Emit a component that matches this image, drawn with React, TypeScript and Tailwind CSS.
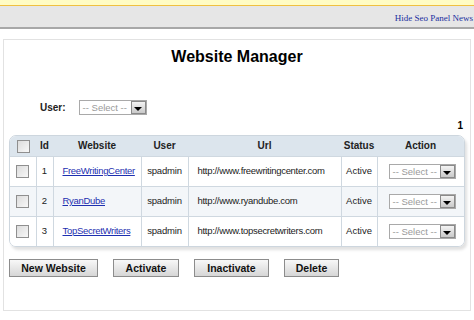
import React from "react";

const LS = { fontFamily: "'Liberation Sans', Arial, sans-serif" };

function Sel({ w = 68 }: { w?: number }) {
  return (
    <div
      className="flex items-center h-[15px] border border-[#a9a9a9] bg-white"
      style={{ width: w }}
    >
      <span className="flex-1 pl-[3px] text-[9.5px] leading-[13px] text-[#9a9a9a] whitespace-nowrap overflow-hidden">
        -- Select --
      </span>
      <span className="w-[15px] h-[13px] border border-[#8a8a8a] bg-gradient-to-b from-[#f4f4f4] to-[#c9c9c9] flex items-end justify-center pb-[2px]">
        <span className="block w-0 h-0 border-l-[4px] border-r-[4px] border-t-[4px] border-l-transparent border-r-transparent border-t-black" />
      </span>
    </div>
  );
}

function Check() {
  return (
    <span className="inline-block w-[13px] h-[13px] border border-[#8f8f8f] bg-gradient-to-br from-[#dcdcdc] to-[#f8f8f8] align-middle" />
  );
}

const rows = [
  { id: 1, name: "FreeWritingCenter", url: "http://www.freewritingcenter.com" },
  { id: 2, name: "RyanDube", url: "http://www.ryandube.com" },
  { id: 3, name: "TopSecretWriters", url: "http://www.topsecretwriters.com" },
];

function Btn({ label, w }: { label: string; w: number }) {
  return (
    <button
      className="h-[18px] border border-[#8c8c8c] bg-gradient-to-b from-[#f8f8f8] to-[#d6d6d6] text-[10.5px] font-bold text-[#111] leading-[16px]"
      style={{ width: w, ...LS }}
    >
      {label}
    </button>
  );
}

export default function App() {
  return (
    <div className="w-[474px] h-[320px] bg-white overflow-hidden relative" style={LS}>
      <div className="h-[6px] bg-[#fffcc4] border-b-[1px] border-[#f0c040]" />
      <div className="h-[23px] bg-[#e6e6e6] border-b-[2px] border-[#a8a8a8] flex justify-end items-start pr-[1px] pt-[6px]">
        <span className="text-[9px] text-[#1a2fa0]" style={{ fontFamily: "'Liberation Serif', 'Times New Roman', serif" }}>
          Hide Seo Panel News
        </span>
      </div>
      <div className="mt-[10px] mx-[3px] h-[272px] border border-[#e2e2e2] px-[5px]">
        <div className="text-center text-[16px] font-bold text-black mt-[8px] leading-[18px]">Website Manager</div>
        <div className="flex items-center mt-[34px] pl-[31px] gap-[13px]">
          <span className="text-[10px] font-bold text-[#222]">User:</span>
          <Sel w={68} />
        </div>
        <div className="text-right text-[10px] font-bold pr-[2px] mt-[5px] leading-[12px]">1</div>
        <div className="mt-[3px] w-[456px] rounded-[7px] border border-[#cdd6de] overflow-hidden shadow-[2px_3px_3px_rgba(0,0,0,0.12)]">
          <table className="table-fixed border-collapse w-full text-[9.5px] text-[#222]">
            <colgroup>
              <col style={{ width: 26 }} />
              <col style={{ width: 17 }} />
              <col style={{ width: 88 }} />
              <col style={{ width: 47 }} />
              <col style={{ width: 153 }} />
              <col style={{ width: 36 }} />
              <col />
            </colgroup>
            <thead>
              <tr className="h-[20px] bg-[#dce5ed] font-bold text-[10px]">
                <th className="text-center align-middle"><Check /></th>
                <th className="text-center">Id</th>
                <th className="text-center">Website</th>
                <th className="text-center">User</th>
                <th className="text-center">Url</th>
                <th className="text-center">Status</th>
                <th className="text-center">Action</th>
              </tr>
            </thead>
            <tbody>
              {rows.map((r, i) => (
                <tr key={r.id} className={`h-[30px] border-t border-[#cfd8e0] ${i === 1 ? "bg-[#f3f6f9]" : "bg-white"}`}>
                  <td className="text-center border-r border-[#cfd8e0]"><Check /></td>
                  <td className="text-center border-r border-[#cfd8e0]">{r.id}</td>
                  <td className="pl-[9px] border-r border-[#cfd8e0] whitespace-nowrap tracking-[-0.3px]">
                    <span className="text-[#1d2fb0] underline">{r.name}</span>
                  </td>
                  <td className="text-center border-r border-[#cfd8e0] tracking-[-0.2px]">spadmin</td>
                  <td className="pl-[9px] border-r border-[#cfd8e0] whitespace-nowrap overflow-hidden tracking-[-0.3px]">{r.url}</td>
                  <td className="text-center border-r border-[#cfd8e0]">Active</td>
                  <td className="pl-[11px]"><Sel w={67} /></td>
                </tr>
              ))}
            </tbody>
          </table>
        </div>
        <div className="flex mt-[12px] gap-[15px] pl-[0px]">
          <Btn label="New Website" w={89} />
          <Btn label="Activate" w={66} />
          <Btn label="Inactivate" w={75} />
          <Btn label="Delete" w={55} />
        </div>
      </div>
    </div>
  );
}
